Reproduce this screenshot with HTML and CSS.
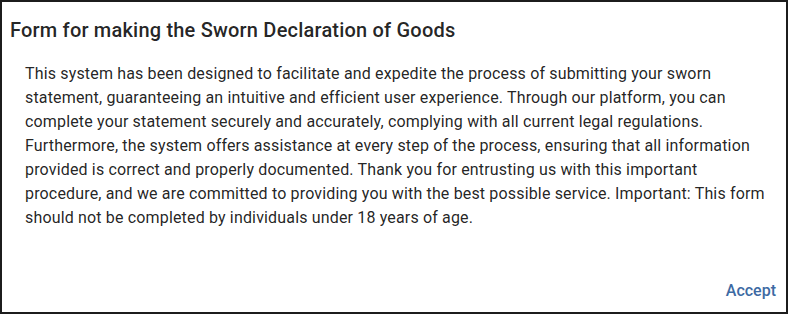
FILE: index.html
```html
<!DOCTYPE html>
<html lang="en">
<head>
    <meta charset="UTF-8">
    <title>Sworn Declaration of Goods</title>

    <link rel="stylesheet" href="styles.css">
</head>

<body>
<div class="dialog">
    <h2 class="dialog-title">Form for making the Sworn Declaration of Goods</h2>

    <div class="dialog-content">
        <p>This system has been designed to facilitate and expedite the process of submitting your sworn
            statement, guaranteeing an intuitive and efficient user experience. Through our platform, you can
            complete your statement securely and accurately, complying with all current legal regulations.
            Furthermore, the system offers assistance at every step of the process, ensuring that all information
            provided is correct and properly documented. Thank you for entrusting us with this important
            procedure, and we are committed to providing you with the best possible service. Important: This form
            should not be completed by individuals under 18 years of age.</p>
    </div>

    <div class="dialog-actions">
        <button class="btn-accept">Accept</button>
    </div>
</div>
</body>

</html>
```

FILE: styles.css
```css
* {
    box-sizing: border-box;
}

html, body {
    margin: 0;
    padding: 0;
    background: #ffffff;
}

body {
    font-family: Roboto, "Liberation Sans", sans-serif;
    color: rgba(0, 0, 0, 0.87);
}

.dialog {
    width: 788px;
    height: 314px;
    border: 2px solid #1c1c1c;
    display: flex;
    flex-direction: column;
    background: #fff;
}

.dialog-title {
    margin: 0;
    padding: 12px 8px 0 8px;
    font-size: 20px;
    font-weight: 500;
    line-height: 32px;
    letter-spacing: 0.01em;
    color: rgba(0, 0, 0, 0.87);
}

.dialog-content {
    padding: 16px 8px 0 23px;
    flex: 1;
}
.dialog-content p {
    margin: 0;
    font-size: 16px;
    line-height: 24px;
    letter-spacing: 0.01em;
    color: rgba(0, 0, 0, 0.87);
}

.dialog-actions {
    display: flex;
    justify-content: flex-end;
    padding: 0 2px 3px 0;
}

.btn-accept {
    border: 0;
    background: transparent;
    font-family: Roboto, "Liberation Sans", sans-serif;
    font-size: 16px;
    font-weight: 500;
    color: #3d6aa3;
    padding: 0 8px;
    height: 36px;
    line-height: 36px;
    cursor: pointer;
}
```
